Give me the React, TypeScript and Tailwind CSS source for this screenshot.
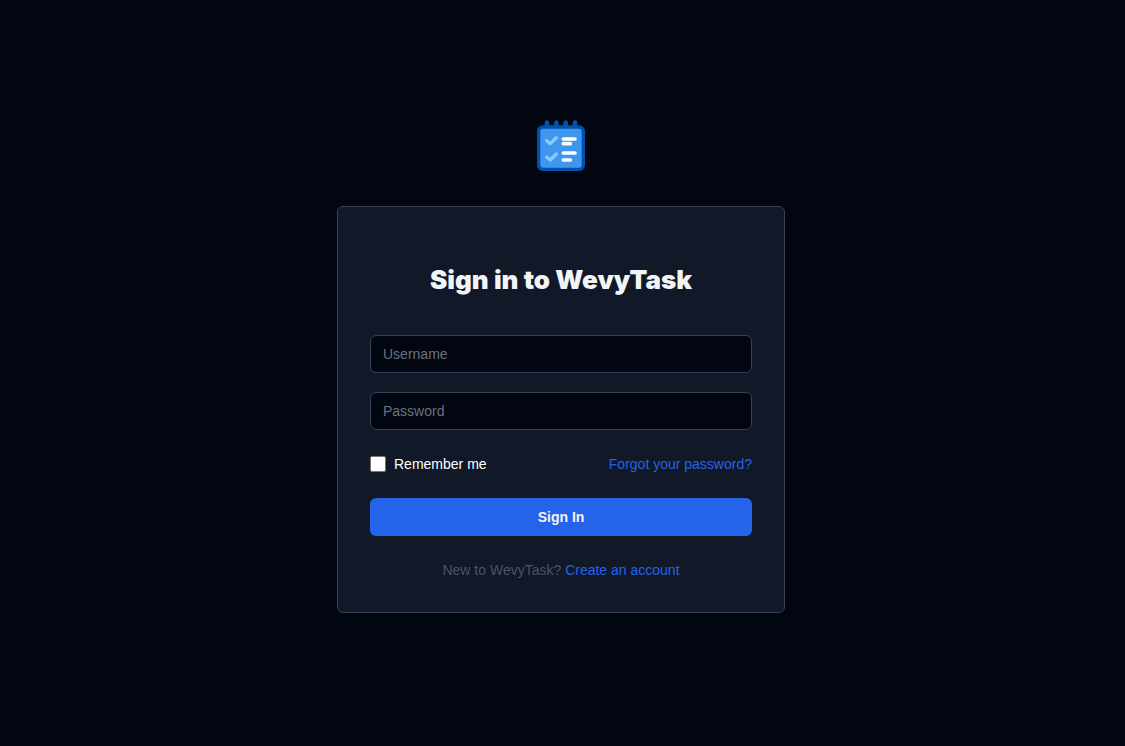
import React from "react";

function Logo() {
  return (
    <svg className="size-16" viewBox="12 12 192 192" fill="none" role="img" aria-label="WevyTask">
      <g stroke="#0550ad" strokeWidth="14" strokeLinecap="round">
        <path d="M66 38v18M94 38v18M122 38v18M150 38v18" />
      </g>
      <rect x="36" y="46" width="144" height="137" rx="18" fill="#0550ad" />
      <rect x="46" y="56" width="124" height="117" rx="9" fill="#3f96ee" />
      <g stroke="#8acbff" strokeWidth="10" strokeLinecap="round" strokeLinejoin="round">
        <path d="M65 92l11 9 18-18M65 141l11 9 18-18" />
      </g>
      <g stroke="#ffffff" strokeWidth="11" strokeLinecap="round">
        <path d="M115 87h35M115 101h21M115 129h35M115 150h21" />
      </g>
    </svg>
  );
}

const field =
  "block h-[38px] w-full rounded-md border border-gray-700 bg-[#020610] px-3 text-sm text-gray-100 placeholder:text-[#6b7280] focus:outline-2 focus:outline-[#2563eb]";

export default function App() {
  return (
    <div className="flex min-h-screen flex-col items-center justify-center bg-[#020610] pr-[3px] pb-[19px] font-['Liberation_Sans',Arial,sans-serif] text-sm">
      <Logo />
      <main className="mt-7 w-full max-w-md rounded-md border border-[#374151] bg-[#111827] px-8 pt-[57px] pb-8">
        <h1 className="text-center font-['Inter',sans-serif] text-[26px] leading-8 font-black text-[#f3f4f6]">
          Sign in to WevyTask
        </h1>
        <form className="mt-[39px]" onSubmit={(e) => e.preventDefault()}>
          <div className="flex flex-col gap-[19px]">
            <input className={field} type="text" placeholder="Username" aria-label="Username" />
            <input className={field} type="password" placeholder="Password" aria-label="Password" />
          </div>
          <div className="mt-6 flex items-center justify-between">
            <label className="flex items-center gap-2 text-white">
              <input
                type="checkbox"
                className="size-4 appearance-none rounded-xs border border-[#767676] bg-white checked:bg-[#2563eb]"
              />
              Remember me
            </label>
            <a href="#forgot" className="text-[#2563eb]">
              Forgot your password?
            </a>
          </div>
          <button
            type="submit"
            className="mt-6 h-[38px] w-full rounded-md bg-[#2563eb] text-sm font-bold text-[#f3f4f6]"
          >
            Sign In
          </button>
        </form>
        <p className="mt-6 text-center text-[#4b5563]">
          New to WevyTask?{" "}
          <a href="#register" className="text-[#2563eb]">
            Create an account
          </a>
        </p>
      </main>
    </div>
  );
}
